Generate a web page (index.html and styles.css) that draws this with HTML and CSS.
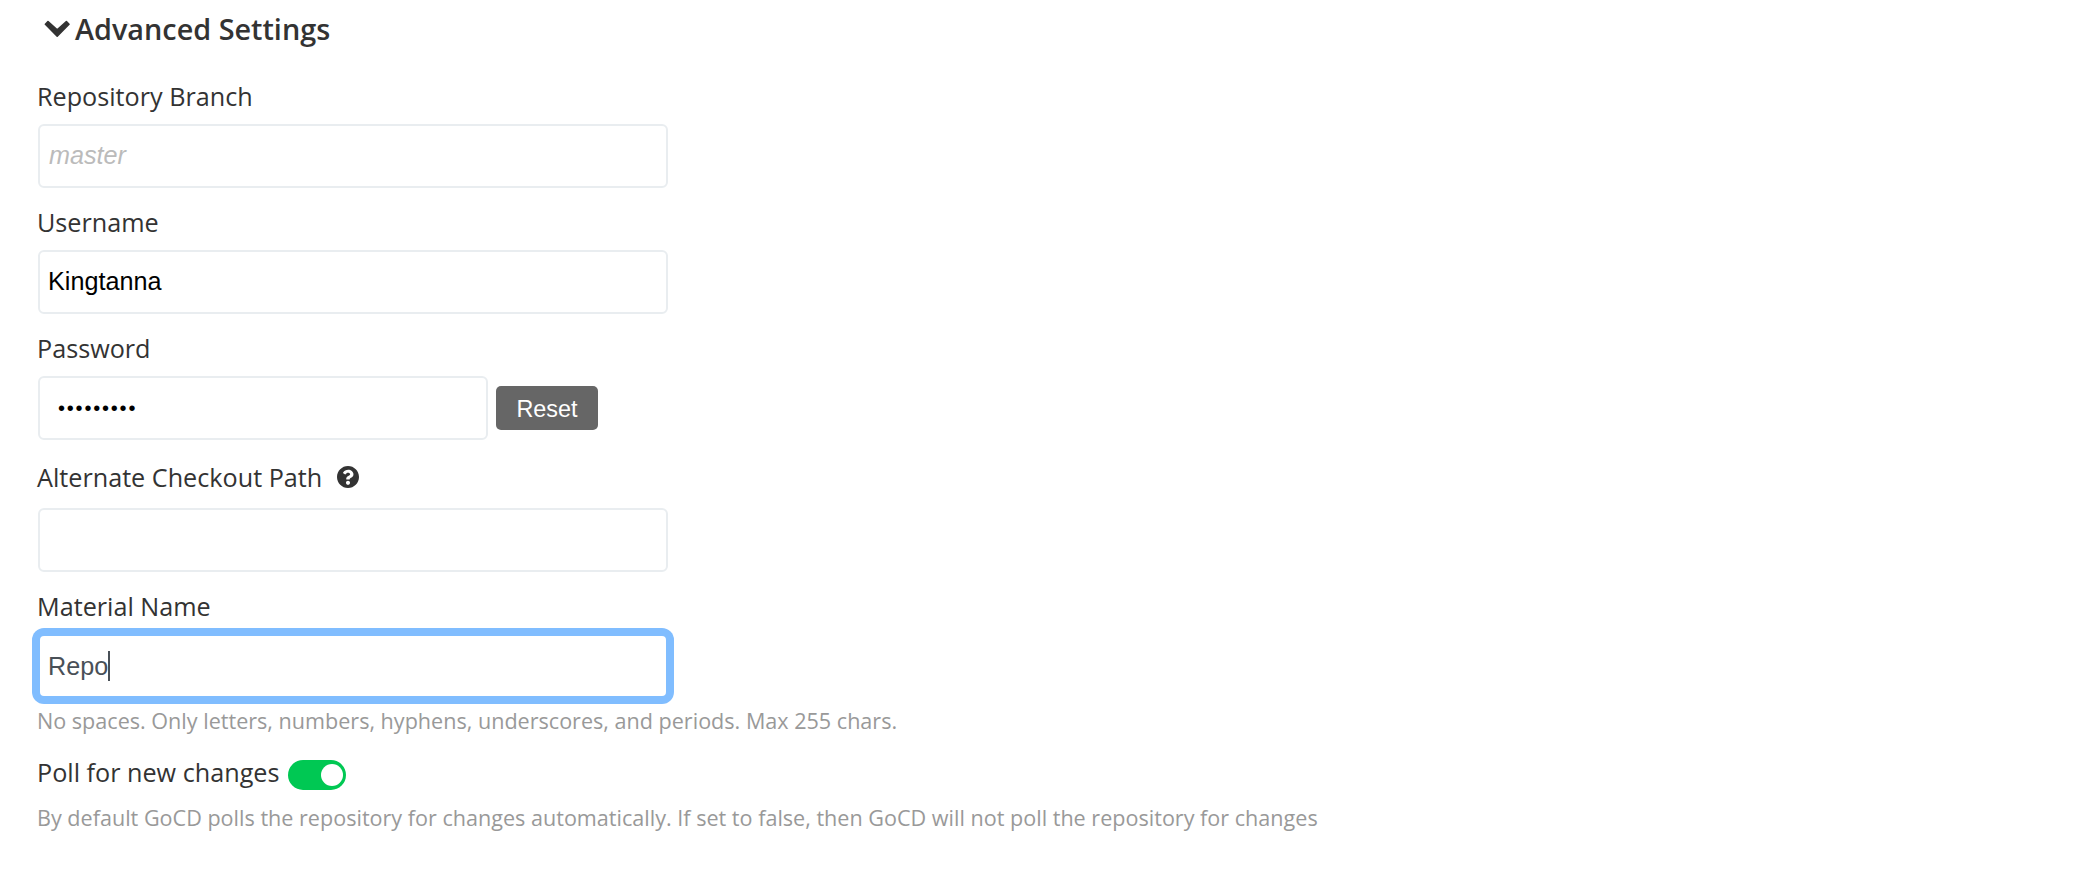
FILE: index.html
```html
<!DOCTYPE html>
<html lang="en">
<head>
<meta charset="utf-8">
<title>Advanced Settings</title>
<link rel="stylesheet" href="styles.css">
</head>
<body>
<main class="settings">
  <h2 class="heading">
    <svg class="chevron" viewBox="0 0 26 18"><path d="M1.400 4.200 4 1.600 13.200 9.900 22.400 1.600 25 4.200 13.200 16.200z" fill="#333" stroke="#333" stroke-width="1.600" stroke-linejoin="round"/></svg>
    <span>Advanced Settings</span>
  </h2>
  <div class="field">
    <label class="label" for="branch">Repository Branch</label>
    <input class="input" id="branch" type="text" placeholder="master">
  </div>
  <div class="field">
    <label class="label" for="username">Username</label>
    <input class="input" id="username" type="text" value="Kingtanna">
  </div>
  <div class="field password-field">
    <label class="label">Password</label>
    <div class="password-row">
      <div class="input password">•••••••••</div>
      <button class="reset" type="button">Reset</button>
    </div>
  </div>
  <div class="field path-field">
    <label class="label" for="path"><span>Alternate Checkout Path</span>
      <svg class="help-icon" viewBox="8 8 496 496"><path fill="#333" d="M504 256c0 137-111 248-248 248S8 393 8 256 119 8 256 8s248 111 248 248zM262.700 90c-54.500 0-89.300 23-116.500 63.800-3.500 5.300-2.400 12.400 2.700 16.300l34.700 26.300c5.200 3.900 12.600 3 16.700-2.100 17.900-22.700 30.100-35.800 57.300-35.800 20.400 0 45.700 13.100 45.700 33 0 15-12.400 22.700-32.500 34C247.100 238.500 216 254.900 216 296v4c0 6.600 5.400 12 12 12h56c6.600 0 12-5.400 12-12v-1.300c0-28.500 83.200-29.600 83.200-106.700 0-58-60.200-102-116.500-102zM256 338c-25.400 0-46 20.600-46 46s20.600 46 46 46 46-20.600 46-46-20.600-46-46-46z"/></svg>
    </label>
    <input class="input" id="path" type="text">
  </div>
  <div class="field">
    <label class="label">Material Name</label>
    <div class="input focused">Repo<span class="caret"></span></div>
    <p class="hint">No spaces. Only letters, numbers, hyphens, underscores, and periods. Max 255 chars.</p>
  </div>
  <div class="poll">
    <div class="poll-row"><span>Poll for new changes</span><span class="toggle"><span class="knob"></span></span></div>
    <p class="hint">By default GoCD polls the repository for changes automatically. If set to false, then GoCD will not poll the repository for changes</p>
  </div>
</main>
</body>
</html>
```

FILE: styles.css
```css
* { box-sizing: border-box; }
body { margin: 0; background: #fff; color: #333; font-family: "Open Sans", sans-serif; }
.settings { padding: 9px 0 0 37px; }
.heading { display: flex; align-items: center; gap: 5px; height: 40px; margin: 0 0 27px; padding-left: 7px; font-size: 28.8px; font-weight: 600; line-height: 40px; white-space: nowrap; }
.chevron { width: 26px; height: 18px; }
.field { margin-bottom: 14px; }
.label { display: flex; align-items: center; height: 40px; margin-bottom: 8px; font-size: 25.2px; line-height: 40px; white-space: nowrap; }
.input { display: flex; align-items: center; width: 630px; height: 64px; margin: 0 0 0 1px; padding: 0 8px 2px; border: 2px solid #e9edf0; border-radius: 6px; outline: 0; background: #fff; color: #000; font-family: "Liberation Sans", Arial, sans-serif; font-size: 25.2px; line-height: 36px; }
.input::placeholder { color: #bbb; font-style: italic; opacity: 1; text-indent: 1px; }
.password-field { margin-bottom: 17px; }
.password-row { display: flex; align-items: center; gap: 8px; }
.password { width: 450px; padding: 0 0 0 18px; font-size: 20px; letter-spacing: 1.8px; }
.reset { width: 102px; height: 44px; padding: 3px 0 0; border: 0; border-radius: 5px; background: #666; color: #fff; font-family: "Liberation Sans", Arial, sans-serif; font-size: 23.4px; }
.path-field .label { margin-bottom: 11px; }
.help-icon { width: 22px; height: 22px; margin: -1px 0 0 15px; }
.focused { padding-bottom: 0; border-color: #80bdff; box-shadow: 0 0 0 6px #80bdff; color: #495057; }
.caret { width: 2px; height: 30px; background: #495057; }
.hint { margin: 0; color: #999; font-size: 21.58px; line-height: 36px; white-space: nowrap; }
.field .hint { margin-top: 5px; }
.poll { margin-top: -1px; }
.poll-row { display: flex; align-items: center; gap: 9px; height: 40px; font-size: 25.2px; line-height: 40px; white-space: nowrap; }
.toggle { display: flex; align-items: center; justify-content: flex-end; width: 58px; height: 30px; margin-top: 6px; padding-right: 3px; border-radius: 15px; background: #00c853; }
.knob { width: 22px; height: 22px; border-radius: 50%; background: #fff; }
.poll .hint { margin-top: 8px; }
```
